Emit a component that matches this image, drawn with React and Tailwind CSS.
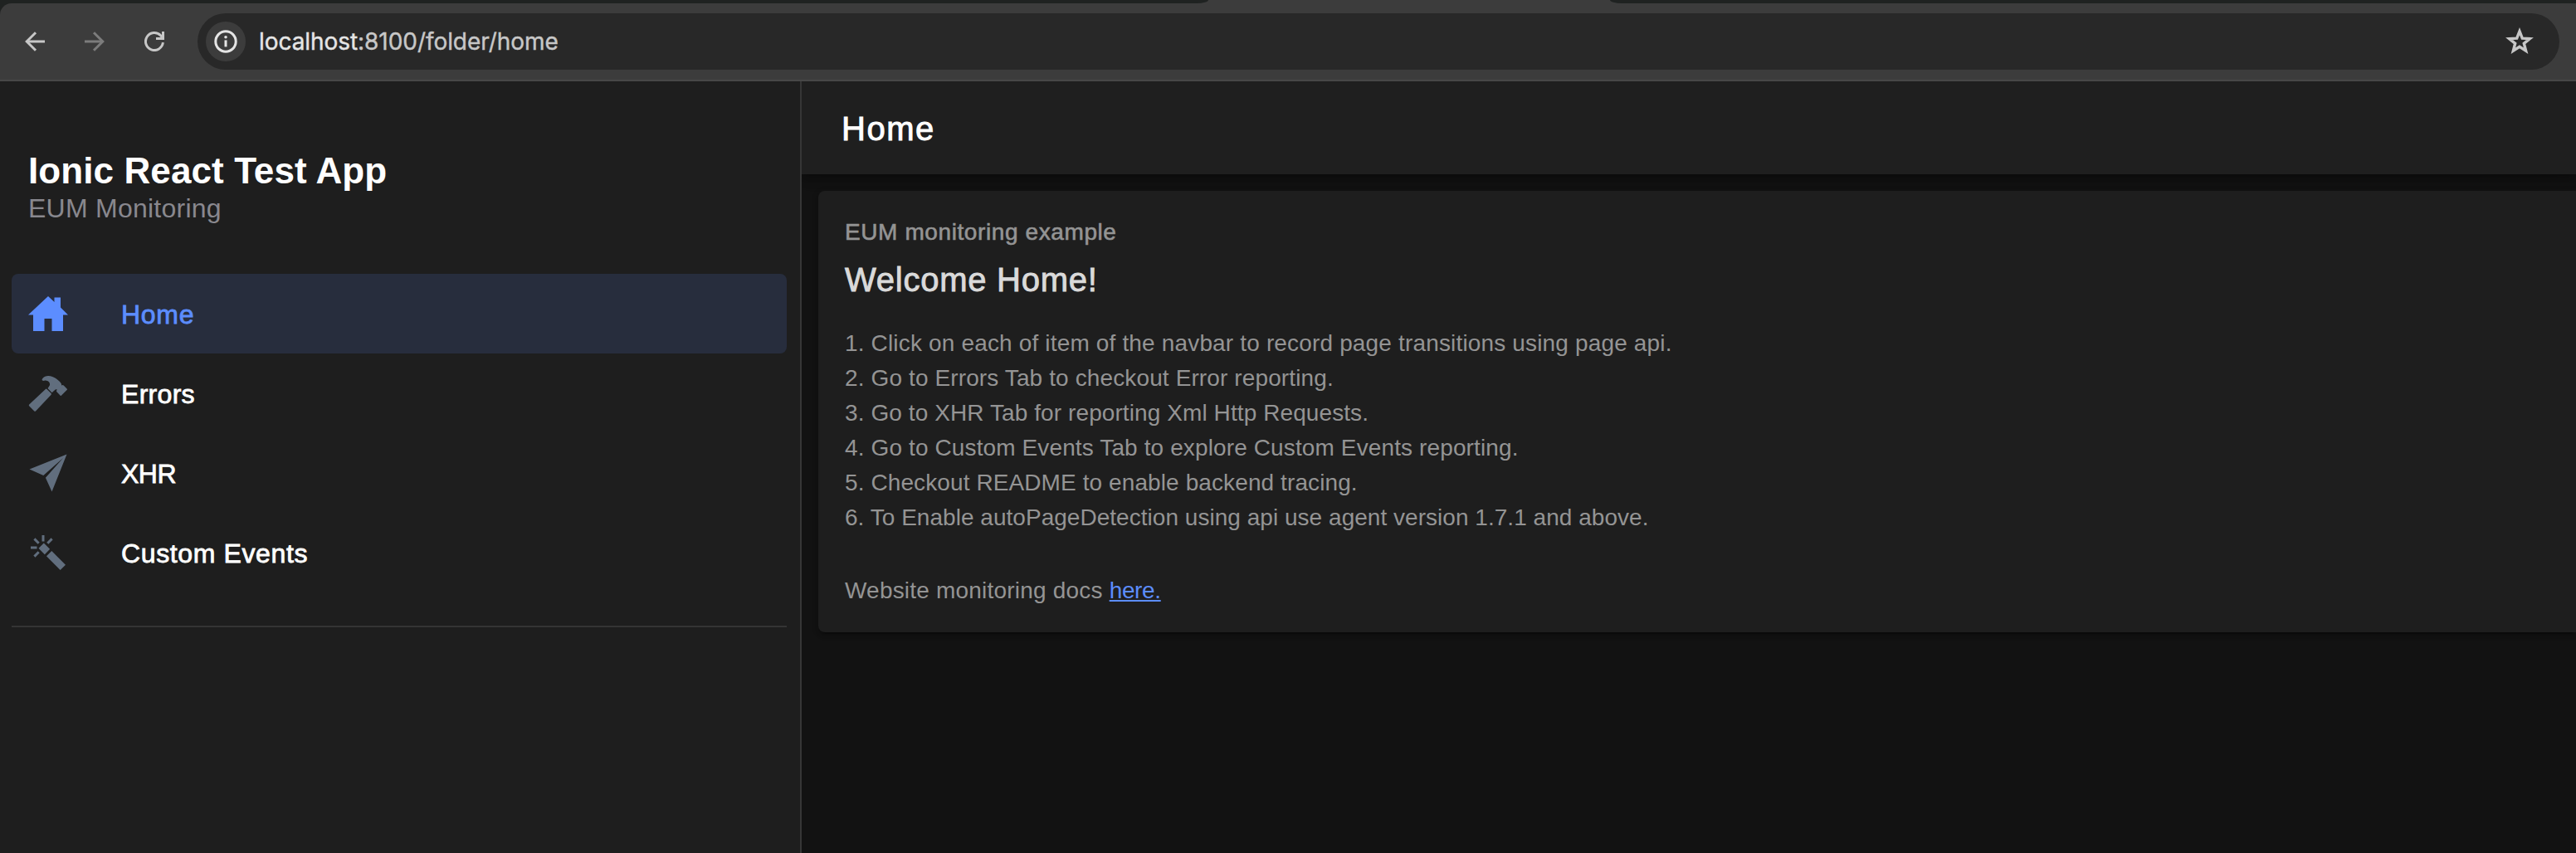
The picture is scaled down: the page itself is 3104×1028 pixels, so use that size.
import { IoHomeSharp, IoHammerSharp, IoPaperPlaneSharp, IoColorWandSharp } from "react-icons/io5";

const NAV = [
  { label: "Home", Icon: IoHomeSharp, active: true, spacing: "tracking-[0.7px]" },
  { label: "Errors", Icon: IoHammerSharp, spacing: "tracking-[0.3px]" },
  { label: "XHR", Icon: IoPaperPlaneSharp, spacing: "tracking-[-0.5px]" },
  { label: "Custom Events", Icon: IoColorWandSharp, spacing: "tracking-[0.62px]" },
];

const STEPS = [
  { text: "1. Click on each of item of the navbar to record page transitions using page api.", spacing: "tracking-[0.16px]" },
  { text: "2. Go to Errors Tab to checkout Error reporting.", spacing: "tracking-[0.12px]" },
  { text: "3. Go to XHR Tab for reporting Xml Http Requests.", spacing: "tracking-[0.09px]" },
  { text: "4. Go to Custom Events Tab to explore Custom Events reporting.", spacing: "tracking-[0.12px]" },
  { text: "5. Checkout README to enable backend tracing.", spacing: "tracking-[0.1px]" },
  { text: "6. To Enable autoPageDetection using api use agent version 1.7.1 and above.", spacing: "tracking-[0.03px]" },
];

function BackIcon({ className }) {
  return (
    <svg className={className} viewBox="0 0 24 24" fill="none" stroke="currentColor" strokeWidth="3">
      <path d="M24 12H2.5" />
      <path d="M13 1.2 2.2 12 13 22.8" />
    </svg>
  );
}

function ReloadIcon({ className }) {
  return (
    <svg className={className} viewBox="0 0 24 24" fill="none" stroke="currentColor" strokeWidth="3">
      <path d="M22.4 13.2A10.5 10.5 0 1 1 19.6 4.8L22 7.6" />
      <path d="M22.5 0V8.5H14" />
    </svg>
  );
}

function InfoIcon({ className }) {
  return (
    <svg className={className} viewBox="0 0 28 28" fill="none">
      <circle cx="14" cy="14" r="12.2" stroke="currentColor" strokeWidth="3" />
      <path d="M14 12.4V20.4" stroke="currentColor" strokeWidth="3" />
      <circle cx="14" cy="8.8" r="1.8" fill="currentColor" />
    </svg>
  );
}

function StarIcon({ className }) {
  return (
    <svg className={className} viewBox="0 0 34 32" fill="none" stroke="currentColor" strokeWidth="3.4" strokeMiterlimit="10">
      <path d="M17 4.6 20.3 13.1 29.4 13.6 22.3 19.3 24.6 28.1 17 23.2 9.4 28.1 11.7 19.3 4.6 13.6 13.7 13.1Z" />
    </svg>
  );
}

function BrowserBar() {
  return (
    <header className="shrink-0">
      <div className="flex h-1 justify-between bg-[#3c3c3c]">
        <div className="h-full w-[1456px] rounded-br-[14px_4px] bg-[#1f2221]" />
        <div className="h-full w-[1164px] rounded-bl-[14px_4px] bg-[#1f2221]" />
      </div>
      <div className="bg-[#1f2221]">
        <div className="flex h-[94px] items-center rounded-tl-[14px] border-b-2 border-[#474747] bg-[#3c3c3c] pr-5 pl-[30px]">
          <BackIcon className="size-6 text-[#c7c7c7]" />
          <BackIcon className="ml-12 size-6 rotate-180 text-[#7c7c7c]" />
          <ReloadIcon className="ml-12 size-6 text-[#c7c7c7]" />
          <div className="ml-10 flex h-[68px] grow items-center rounded-full bg-[#282828] pr-[31px] pl-[10px]">
            <div className="flex size-12 items-center justify-center rounded-full bg-[#3c3c3c]">
              <InfoIcon className="size-7 text-[#e5e5e5]" />
            </div>
            <p className="ml-4 grow font-[Inter,sans-serif] text-[28px] leading-9 tracking-[-0.06px] text-[#c7c7c7] [-webkit-text-stroke:0.4px_currentColor]">
              <span className="text-[#e5e5e5]">localhost</span>:8100/folder/home
            </p>
            <StarIcon className="mb-0.5 h-8 w-[34px] overflow-visible text-[#c7c7c7]" />
          </div>
        </div>
      </div>
    </header>
  );
}

function Menu() {
  return (
    <aside className="w-[966px] shrink-0 border-r-2 border-[#363636] bg-[#1e1e1e] pt-[84px] pr-4 pl-[14px]">
      <div className="pl-5">
        <h1 className="text-[44px] leading-[48px] font-bold tracking-[0.1px] text-white">Ionic React Test App</h1>
        <p className="mt-[3px] text-[32px] leading-9 tracking-[0.25px] text-[#89888e]">EUM Monitoring</p>
      </div>
      <nav className="mt-[61px] border-b-2 border-[#343434] pb-10">
        {NAV.map(({ label, Icon, active, spacing }) => (
          <a
            key={label}
            className={`flex h-24 items-center rounded-lg pl-5 ${active ? "bg-[#272d3d] text-[#5c8dff]" : "text-white"}`}
          >
            <Icon className={`size-12 ${active ? "" : "text-[#616e7e]"}`} />
            <span className={`ml-16 pt-0.5 text-[32px] [-webkit-text-stroke:0.8px_currentColor] ${spacing}`}>{label}</span>
          </a>
        ))}
      </nav>
    </aside>
  );
}

function Content() {
  return (
    <main className="flex min-w-0 grow flex-col overflow-hidden bg-[#121212]">
      <div className="flex h-28 shrink-0 items-center bg-[#1f1f1f] pt-px pl-12 shadow-[0_4px_8px_-2px_rgba(0,0,0,0.2),0_8px_10px_rgba(0,0,0,0.14),0_2px_20px_rgba(0,0,0,0.12)]">
        <h2 className="text-[40px] tracking-[1.5px] text-white [-webkit-text-stroke:0.9px_currentColor]">Home</h2>
      </div>
      <section className="mt-5 ml-5 h-[532px] shrink-0 rounded-l-lg bg-[#1e1e1e] pt-[34px] pl-8 shadow-[0_6px_2px_-4px_rgba(0,0,0,0.2),0_4px_4px_rgba(0,0,0,0.14),0_2px_10px_rgba(0,0,0,0.12)]">
        <p className="text-[28px] leading-8 tracking-[0.6px] text-[#949494] [-webkit-text-stroke:0.6px_currentColor]">EUM monitoring example</p>
        <h3 className="mt-[17px] text-[40px] leading-[48px] tracking-[0.75px] text-[#dadada] [-webkit-text-stroke:0.9px_currentColor]">Welcome Home!</h3>
        <div className="mt-8 text-[28px] leading-[42px] text-[#949494]">
          {STEPS.map(({ text, spacing }) => (
            <p key={text} className={spacing}>{text}</p>
          ))}
          <p className="mt-[46px] tracking-[0.2px]">
            Website monitoring docs{" "}
            <a className="tracking-[-0.36px] text-[#5c8dff] underline decoration-2 underline-offset-2">here.</a>
          </p>
        </div>
      </section>
    </main>
  );
}

export default function App() {
  return (
    <div className="flex h-[1028px] w-[3104px] flex-col overflow-hidden font-['Liberation_Sans',Arial,sans-serif]">
      <BrowserBar />
      <div className="flex min-h-0 grow">
        <Menu />
        <Content />
      </div>
    </div>
  );
}
